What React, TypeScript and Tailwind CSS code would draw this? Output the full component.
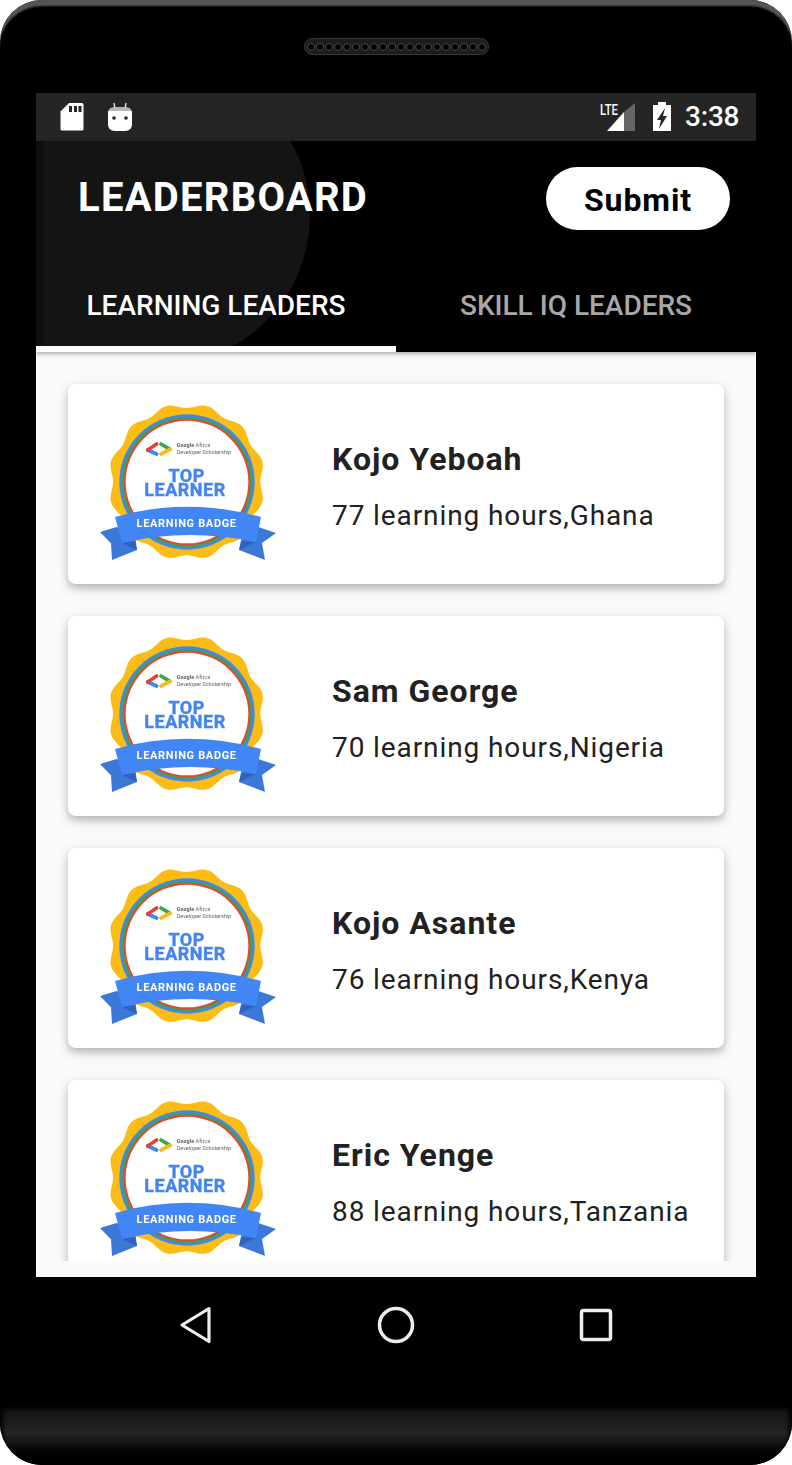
import React from "react";

const scallop = (() => {
  const pts: string[] = [];
  for (let i = 0; i < 360; i++) {
    const t = (i * Math.PI) / 180;
    const r = 228 - 7 * Math.cos(12 * t);
    pts.push(`${(290 + r * Math.sin(t)).toFixed(1)},${(260 - r * Math.cos(t)).toFixed(1)}`);
  }
  return pts.join(" ");
})();

function Badge() {
  return (
    <svg viewBox="0 0 600 525" className="w-[200px] h-[175px] blur-[0.6px] shrink-0">
      <polygon points={scallop} fill="#fbbc16" />
      <circle cx="291" cy="261" r="203" fill="#4285f4" />
      <circle cx="291" cy="261" r="196" fill="#34a853" />
      <circle cx="291" cy="261" r="190" fill="#ea4335" />
      <circle cx="291" cy="261" r="184" fill="#ffffff" />
      <path d="M173 165 L200 177" fill="none" stroke="#4285f4" strokeWidth="11" strokeLinecap="round" />
      <path d="M200 147 L173 165" fill="none" stroke="#ea4335" strokeWidth="11" strokeLinecap="round" />
      <path d="M213 147 L240 163" fill="none" stroke="#34a853" strokeWidth="11" strokeLinecap="round" />
      <path d="M240 163 L213 177" fill="none" stroke="#fbbc16" strokeWidth="11" strokeLinecap="round" />
      <text x="260" y="155" fontSize="16.5" fontFamily="Roboto, sans-serif" fill="#5f6368"><tspan fontWeight="700">Google</tspan> Africa</text>
      <text x="260" y="177" fontSize="16.5" fontFamily="Roboto, sans-serif" fill="#5f6368">Developer Scholarship</text>
      <text x="290" y="261" textAnchor="middle" fontSize="54" fontWeight="700" letterSpacing="1.5" stroke="#4285f4" strokeWidth="1.2" fontFamily="Roboto, sans-serif" fill="#4285f4">TOP</text>
      <text x="285" y="303" textAnchor="middle" fontSize="54" fontWeight="700" letterSpacing="1.5" stroke="#4285f4" strokeWidth="1.2" fontFamily="Roboto, sans-serif" fill="#4285f4">LEARNER</text>
      <polygon points="80,396 30,411 63,445 66,495 141,465 135,420" fill="#3c78d8" />
      <polygon points="505,396 558,414 516,444 525,495 447,465 456,420" fill="#3c78d8" />
      <polygon points="96,444 141,465 135,438" fill="#2f62b8" />
      <polygon points="498,441 447,465 456,438" fill="#2f62b8" />
      <path d="M75 366 Q290 305 513 366 L498 441 Q290 398 96 444 Z" fill="#4285f4" />
      <text x="290" y="396" textAnchor="middle" fontSize="33" fontWeight="700" letterSpacing="2" fontFamily="Roboto, sans-serif" fill="#ffffff">LEARNING BADGE</text>
    </svg>
  );
}

const leaders = [
  { name: "Kojo Yeboah", info: "77 learning hours,Ghana" },
  { name: "Sam George", info: "70 learning hours,Nigeria" },
  { name: "Kojo Asante", info: "76 learning hours,Kenya" },
  { name: "Eric Yenge", info: "88 learning hours,Tanzania" },
];

function Card({ name, info }: { name: string; info: string }) {
  return (
    <div className="h-[200px] shrink-0 bg-white rounded-lg shadow-[0_4px_10px_rgba(0,0,0,0.3)] flex items-start pl-[22px] pt-[11px]">
      <Badge />
      <div className="ml-[42px] mt-[44px]">
        <div className="text-[32px] leading-[40px] font-bold text-[#212121] tracking-[1px]">{name}</div>
        <div className="mt-[17px] text-[28px] leading-[40px] text-[#212121] tracking-[0.9px]">{info}</div>
      </div>
    </div>
  );
}

const holes = Array.from({ length: 20 }, (_, i) => i);

export default function App() {
  return (
    <div className="w-[792px] h-[1465px] bg-white font-['Roboto',sans-serif]">
      <div className="w-full h-full rounded-[42px] bg-black overflow-hidden flex flex-col shadow-[inset_0_7px_2px_-1px_#555]">
        <div className="h-[93px] shrink-0 flex items-start justify-center pt-[38px]">
          <div className="w-[185px] h-[17px] rounded-full bg-[#1c1c1c] border border-[#3a3a3a] flex items-center justify-center gap-[1px]">
            {holes.map((i) => (
              <div key={i} className="w-[8px] h-[8px] rounded-full bg-black border border-[#4a4a4a]" />
            ))}
          </div>
        </div>
        <div className="mx-[36px] flex-1 flex flex-col min-h-0">
          <div className="h-[48px] shrink-0 bg-[#252525] flex items-center text-white">
            <svg viewBox="0 0 24 30" className="w-[24px] h-[30px] ml-[24px]">
              <path d="M9 1 H22 a1.5 1.5 0 0 1 1.5 1.5 V27 a1.5 1.5 0 0 1 -1.5 1.5 H2 a1.5 1.5 0 0 1 -1.5 -1.5 V9.5 Z" fill="#fff" />
              <rect x="9" y="4" width="3" height="6" fill="#252525" />
              <rect x="14" y="4" width="3" height="6" fill="#252525" />
              <rect x="18.5" y="4" width="3" height="6" fill="#252525" />
            </svg>
            <svg viewBox="0 0 24 30" className="w-[24px] h-[30px] ml-[24px]">
              <path d="M6 1 L7 7 M18 1 L17 7" stroke="#ddd" strokeWidth="1.5" />
              <path d="M0 11 Q0 5 7 5 H17 Q24 5 24 11 Z" fill="#b5b5b5" />
              <path d="M0 9 H24 V22 Q24 29 17 29 H7 Q0 29 0 22 Z" fill="#fff" />
              <circle cx="6" cy="16" r="1.8" fill="#252525" />
              <circle cx="18" cy="16" r="1.8" fill="#252525" />
            </svg>
            <div className="flex-1" />
            <svg viewBox="0 0 36 30" className="w-[36px] h-[30px]">
              <text x="0" y="13" fontSize="15.5" fontWeight="500" fill="#fff" fontFamily="Roboto, sans-serif" textLength="18" lengthAdjust="spacingAndGlyphs">LTE</text>
              <polygon points="35,1 35,29 24,29 24,10" fill="#666" />
              <polygon points="24,10 24,29 7,29" fill="#fff" />
            </svg>
            <svg viewBox="0 0 20 30" className="w-[20px] h-[30px] ml-[16px] mr-[13px]">
              <path d="M6 0 H14 V3 H19 V29 H1 V3 H6 Z" fill="#fff" />
              <path d="M13 6 L5 18 H9 L7 27 L15 14 H11 Z" fill="#252525" />
            </svg>
            <div className="w-[54px] mr-[17px] text-[28px] leading-[48px] font-medium text-white tracking-[-0.2px]">3:38</div>
          </div>

          <div className="relative h-[211px] shrink-0 bg-black overflow-hidden z-10 shadow-[0_2px_4px_rgba(0,0,0,0.3)]">
            <div className="absolute left-0 top-[-76px] w-[274px] h-[300px] rounded-r-[150px] bg-[#141414]" />
            <div className="absolute left-0 top-0 w-[8px] h-full bg-[#0f0f0f]" />
            <div className="relative h-[141px] flex items-start justify-between pl-[42px] pr-[26px] pt-[27px]">
              <div className="text-[40px] leading-[60px] font-bold text-white tracking-[1.25px]">LEADERBOARD</div>
              <div className="mt-[-1px] w-[184px] h-[63px] rounded-full bg-white flex items-center justify-center pt-[2px] text-[32px] font-bold text-black tracking-[0.9px]">Submit</div>
            </div>
            <div className="relative flex h-[70px]">
              <div className="relative w-1/2 flex justify-center pt-[4px] text-[28px] leading-[40px] font-medium text-white">
                LEARNING LEADERS
                <div className="absolute left-0 right-0 bottom-0 h-[6px] bg-white" />
              </div>
              <div className="w-1/2 flex justify-center pt-[4px] text-[28px] leading-[40px] font-medium text-[#a8a8a8]">
                SKILL IQ LEADERS
              </div>
            </div>
          </div>

          <div className="flex-1 min-h-0 bg-[#fafafa] pb-[16px] flex flex-col">
            <div className="flex-1 min-h-0 overflow-hidden px-[32px] pt-[32px] flex flex-col gap-[32px]">
              {leaders.map((l) => (
                <Card key={l.name} name={l.name} info={l.info} />
              ))}
            </div>
          </div>
        </div>
        <div className="h-[130px] shrink-0 flex items-center pl-[178px] pb-[34px]">
          <svg viewBox="0 0 36 38" className="w-[36px] h-[38px]">
            <path d="M31 2.5 L4 19 L31 35.5 Z" fill="none" stroke="#eeeeee" strokeWidth="3.2" strokeLinejoin="round" />
          </svg>
          <svg viewBox="0 0 38 38" className="w-[38px] h-[38px] ml-[163px]">
            <circle cx="19" cy="19" r="16.5" fill="none" stroke="#eeeeee" strokeWidth="3.5" />
          </svg>
          <svg viewBox="0 0 34 34" className="w-[34px] h-[34px] ml-[164px]">
            <rect x="2.5" y="2.5" width="29" height="29" rx="2" fill="none" stroke="#eeeeee" strokeWidth="3.5" />
          </svg>
        </div>
        <div className="h-[58px] shrink-0 bg-gradient-to-b from-[#111111] via-[#262626] via-[45%] to-[#000000] shadow-[inset_3px_0_5px_#000,inset_-3px_0_5px_#000]" />
      </div>
    </div>
  );
}
